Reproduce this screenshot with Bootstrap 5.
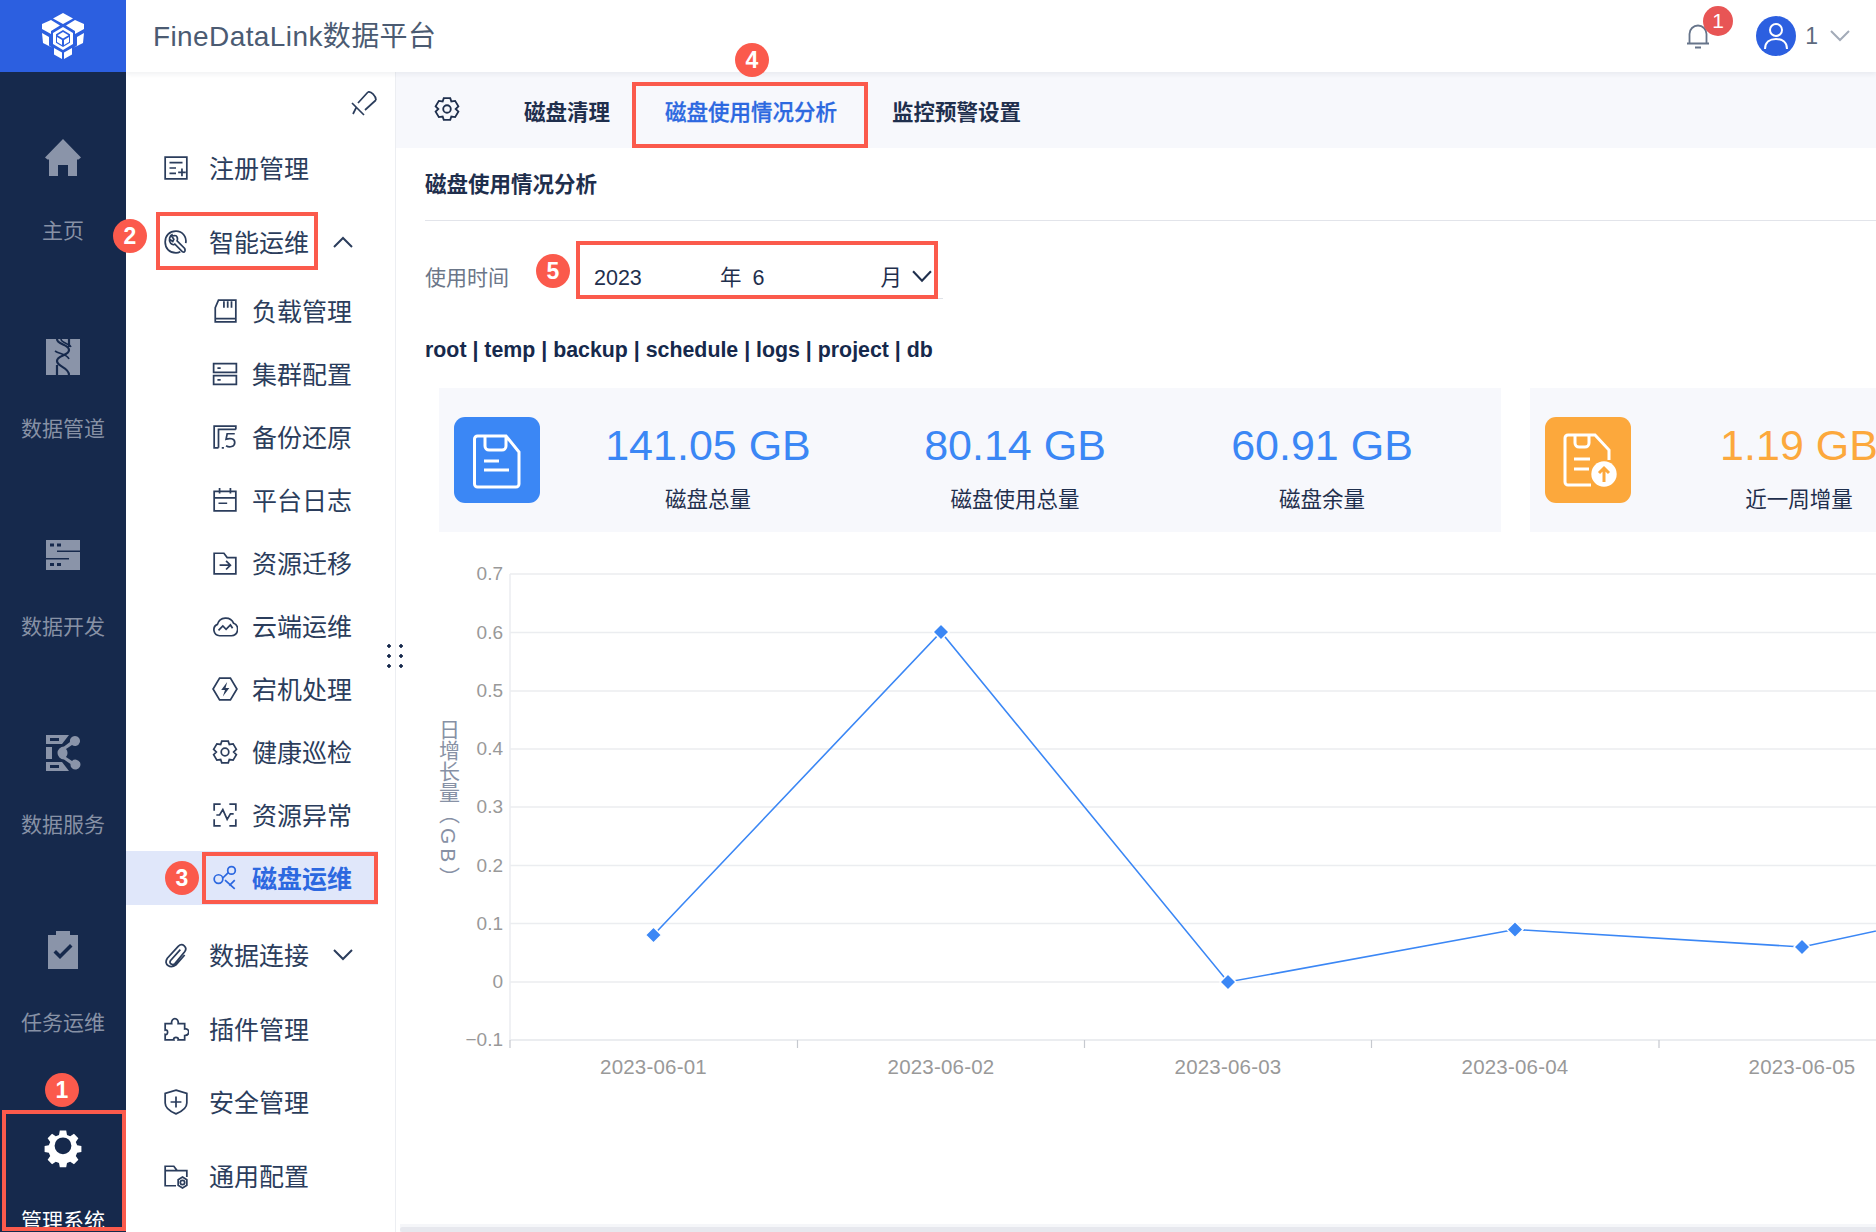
<!DOCTYPE html>
<html lang="zh">

<head>
	<meta charset="UTF-8" />
	<meta name="viewport" content="width=device-width, initial-scale=1" />
	<title>FineDataLink数据平台</title>
	<link href="https://cdn.jsdelivr.net/npm/bootstrap@5.3.0/dist/css/bootstrap.min.css" rel="stylesheet" />
	<style>
		:root {
		  --rail: #16294c;
		  --rail-text: #8791a5;
		  --ink: #2b3d5c;
		  --blue: #2c68e0;
		  --mark: #fb5a4c;
		  --soft: #f7f8fc;
		}

		html, body { height: 100%; }

		body {
		  font-family: "Liberation Sans", "Noto Sans CJK SC", sans-serif;
		  color: var(--ink);
		  background: #fff;
		  overflow: hidden;
		}

		.app { height: 1232px; }

		/* left rail */
		.rail { width: 126px; background: var(--rail); overflow: hidden; }
		.rail-logo { height: 72px; background: #2c5fe0; }
		.rail-item { height: 198px; padding-top: 63px; color: var(--rail-text); font-size: 21px; line-height: 28px; }
		.rail-item svg { width: 48px; height: 48px; fill: #8a94a9; margin-bottom: 34px; }
		.rail-item.on { color: #fff; }
		.rail-item.on svg { fill: #fff; }

		/* header */
		.topbar { height: 72px; padding: 0 26px 0 27px; box-shadow: 0 2px 5px rgba(30, 40, 70, .07); z-index: 2; }
		.brand { font-size: 28px; letter-spacing: .4px; color: #4b5b72; padding-top: 2px; }
		.bell-wrap { width: 34px; height: 34px; }
		.bell-count { width: 30px; height: 30px; left: 22px; top: -13px; background: #e85555; color: #fff; font-size: 21px; line-height: 30px; }
		.avatar { width: 40px; height: 40px; background: #2c5fe0; margin-left: 41px; }
		.user-name { font-size: 23px; color: #5d6a7e; margin: 0 12px 0 9px; }

		/* menu */
		.side { width: 270px; border-right: 1px solid #eceef2; flex-shrink: 0; }
		.pin-row { height: 65px; padding: 19px 18px 0 0; }
		.menu-top, .menu-sub { font-size: 25px; line-height: 1; color: var(--ink); }
		.menu-top { height: 62px; margin-bottom: 11.5px; padding: 0 42px 0 37px; gap: 20px; }
		.menu-top span { padding-top: 3px; }
		.menu-sub { height: 54px; margin-bottom: 9px; padding-left: 86px; gap: 14px; }
		.menu-sub span { padding-top: 2px; }
		.menu-gap { margin-top: 19px; }
		.menu-sub.on { background: #e0e7fa; color: var(--blue); width: 252px; font-weight: 700; }
		.menu-ico { width: 26px; height: 26px; fill: none; stroke: currentColor; stroke-width: 1.6; flex-shrink: 0; }
		.arrow { width: 20px; height: 12px; fill: none; stroke: currentColor; stroke-width: 2; }
		.grip { right: -12px; top: 569px; width: 24px; height: 30px; z-index: 3; background-image: radial-gradient(circle, #16294c 1.5px, transparent 2px); background-size: 12px 10px; }

		/* tabs */
		.tabbar { height: 76px; background: var(--soft); padding: 6px 0 0 38px; font-size: 21.5px; font-weight: 700; color: #1f2f4d; }
		.tabbar svg { width: 26px; height: 26px; fill: none; stroke: #1f2f4d; stroke-width: 1.7; margin-right: 64px; margin-top: -8px; }
		.tab-now { color: var(--blue); margin: 0 55px; font-weight: 500; -webkit-text-stroke: .3px var(--blue); }

		/* page */
		.page-head { margin: 0 0 0 29px; height: 73px; border-bottom: 1px solid #e2e4ea; font-size: 21.5px; font-weight: 700; color: #1f2f4d; line-height: 74px; }
		.time-row { margin-left: 29px; height: 114px; }
		.time-label { font-size: 21px; color: #6b7688; width: 151px; }
		.time-field { width: 367px; height: 56px; padding: 15px 11px 0 18px; border-bottom: 1px solid #dfe2e8; font-size: 21.5px; color: #1f2f4d; margin-bottom: 14px; }
		.time-field svg { width: 20px; height: 13px; margin-top: -4px; fill: none; stroke: #1f2f4d; stroke-width: 2; }
		.t-year { width: 126px; }
		.t-month { width: 128px; margin-left: 11px; }
		.path-row { margin-left: 29px; font-size: 21.35px; font-weight: 700; color: #16294c; line-height: 30px; height: 30px; }
		.stat-row { margin: 23px 0 0 43px; gap: 29px; }
		.stat-box { width: 1062px; height: 144px; background: var(--soft); padding-left: 15px; flex-shrink: 0; }
		.stat-ico { width: 86px; height: 86px; border-radius: 11px; margin-right: 14.5px; flex-shrink: 0; }
		.stat-ico svg { width: 62px; height: 62px; fill: none; stroke: #fff; stroke-width: 3; }
		.ico-blue { background: #3b87f5; }
		.ico-orange { background: #fca83c; }
		.stat-col { width: 307px; flex-shrink: 0; padding-top: 32px; align-self: flex-start; }
		.stat-num { font-size: 43px; line-height: 50px; color: #3b87f5; }
		.stat-num.warm { color: #fca83c; }
		.stat-name { font-size: 21.5px; line-height: 28px; color: #1f2f4d; margin-top: 16px; }
		.chart { width: 1480px; height: 560px; margin-top: 8px; }
		.chart text { font-family: "Liberation Sans", "Noto Sans CJK SC", sans-serif; fill: #999; font-size: 19px; }
		.chart .date-tick { font-size: 20.5px; letter-spacing: .2px; }
		.chart .axis-name { writing-mode: vertical-rl; font-size: 21px; fill: #8791a5; }
		.axis-unit { letter-spacing: 4px; }
		.hscroll { left: 4px; right: 0; bottom: 0; height: 8px; background: #f5f6f9; }
		.hscroll span { height: 5px; background: #e7e8ee; border-radius: 3px 0 0 3px; margin-top: 3px; }

		/* red call-outs drawn over the shot */
		.call-box { border: 4px solid var(--mark); z-index: 5; }
		.call-dot { width: 34px; height: 34px; border-radius: 50%; background: var(--mark); color: #fff; font-size: 23px; font-weight: 700; line-height: 34px; text-align: center; z-index: 6; }
		.b1 { left: 2px; top: 1110px; width: 124px; height: 121px; }
		.b2 { left: 156px; top: 212px; width: 162px; height: 58px; }
		.b3 { left: 202px; top: 852px; width: 176px; height: 52px; }
		.b4 { left: 632px; top: 82px; width: 236px; height: 66px; }
		.b5 { left: 576px; top: 241px; width: 362px; height: 58px; }
		.d1 { left: 45px; top: 1073px; }
		.d2 { left: 113px; top: 219px; }
		.d3 { left: 165px; top: 861px; }
		.d4 { left: 735px; top: 43px; }
		.d5 { left: 536px; top: 254px; }
	</style>
</head>

<body>
	<div class="app d-flex position-relative">
		<aside class="rail flex-shrink-0">
			<div class="rail-logo d-flex align-items-center justify-content-center">
				<svg width="46" height="48" viewBox="0 0 46 48" fill="#fff">
					<path d="M23 1l10 5.500-10 5.500-10-5.500zM11 8l9 5.500-9 5.500v3L2 17v-5zM35 8l9 4v5l-9 5v-3l-9-5.500zM2 21l7 4v8.500l3 2L3 31zM44 21l-1 10-9 4.500 3-2V25zM14 36l8 4.500V47l-8-4.500zM32 36v6.500L24 47v-6.500z" />
					<path d="M23 15l10 6v11l-10 6-10-6V21z" />
					<path d="M23 18l7 4.200v8.600L23 35l-7-4.200v-8.600z" fill="#2c5fe0" />
					<path d="M23 20l5.500 3.300L23 26.500l-5.500-3.200zM17 25l5 3v5l-5-3zM29 25v5l-5 3v-5z" />
				</svg>
			</div>
			<div class="rail-item text-center">
				<svg viewBox="0 0 48 48"><path d="M24 4L42 22.500l-2.500 2H38V41H29V30H19V41H10V24.500H8.500l-2.500-2z" /></svg>
				<div>主页</div>
			</div>
			<div class="rail-item text-center">
				<svg viewBox="0 0 48 48"><path d="M7 6h34v36H7z" /><path d="M18 6c0 6 12 5 12 11s-12 5-12 11 12 6 12 14M18 42V32M30 6v8" fill="none" stroke="#16294c" stroke-width="2.200" /><path d="M22 6c0 4 8 4 10 8M16 18c4 3 12 3 14 8" fill="none" stroke="#16294c" stroke-width="1.600" /></svg>
				<div>数据管道</div>
			</div>
			<div class="rail-item text-center">
				<svg viewBox="0 0 48 48"><path fill-rule="evenodd" d="M7 9h34v10.500H18V21h23v18H7V28.500h23V27H7zM11 12.500v3h4v-3zM18 12.500v3h4v-3zM11 32v3h4v-3zM18 32v3h4v-3z" /></svg>
				<div>数据开发</div>
			</div>
			<div class="rail-item text-center">
				<svg viewBox="0 0 48 48"><path fill-rule="evenodd" d="M7 6h23l-7 9H7zM11 9v3h9V9zM7 18h6v12H7zM7 33h16l7 9H7zM11 36v3h9v-3zM36 7a5 5 0 1 1-3 9l-6 4a6 6 0 0 1 0 8l6 4a5 5 0 1 1-1.500 3l-6.500-4.500a6.500 6.500 0 1 1 0-13L31 13a5 5 0 0 1 5-6z" /></svg>
				<div>数据服务</div>
			</div>
			<div class="rail-item text-center">
				<svg viewBox="0 0 48 48"><path fill-rule="evenodd" d="M9 8h8V4h14v4h8v34H9zM17 23l-2.500 2.500L21 32l12.500-12.500L31 17 21 27z" /></svg>
				<div>任务运维</div>
			</div>
			<div class="rail-item on text-center">
				<svg viewBox="-6 -2 60 60"><path fill-rule="evenodd" d="M20 5h8l1 5.500 4 1.700 4.700-3.200 5.500 5.500-3.200 4.700 1.700 4 5.300 1v7.600l-5.300 1-1.700 4 3.200 4.700-5.500 5.500-4.700-3.200-4 1.700-1 5.300h-8l-1-5.300-4-1.700-4.700 3.200-5.500-5.500 3.200-4.700-1.700-4-5.300-1v-7.600l5.300-1 1.700-4-3.200-4.700 5.500-5.500 4.700 3.200 4-1.700zM24 13.500a10.500 10.500 0 1 0 0 21 10.500 10.500 0 0 0 0-21z" /></svg>
				<div>管理系统</div>
			</div>
		</aside>

		<div class="flex-grow-1 d-flex flex-column overflow-hidden">
			<header class="topbar d-flex align-items-center bg-white position-relative">
				<div class="brand">FineDataLink数据平台</div>
				<div class="ms-auto d-flex align-items-center">
					<div class="bell-wrap position-relative d-flex align-items-center justify-content-center">
						<svg width="24" height="25" viewBox="0 0 24 25" fill="none" stroke="#66748a" stroke-width="1.800"><path d="M3.500 19V10a8.500 8.500 0 0 1 17 0v9M1 19.500h22M9 23.500h6" /></svg>
						<span class="bell-count position-absolute rounded-circle text-center">1</span>
					</div>
					<div class="avatar rounded-circle d-flex align-items-center justify-content-center">
						<svg width="28" height="30" viewBox="0 0 28 30" fill="none" stroke="#fff" stroke-width="2"><circle cx="14" cy="9" r="6" /><path d="M3 28c0-7 5-10 11-10s11 3 11 10" /></svg>
					</div>
					<span class="user-name">1</span>
					<svg width="20" height="12" viewBox="0 0 20 12" fill="none" stroke="#a3abb8" stroke-width="2"><path d="M1 1l9 9 9-9" /></svg>
				</div>
			</header>

			<div class="d-flex flex-grow-1 overflow-hidden">
				<nav class="side position-relative">
					<div class="pin-row d-flex justify-content-end">
						<svg width="26" height="26" viewBox="0 0 26 26" fill="none" stroke="#2b3d5c" stroke-width="1.700"><path d="M1 12l12 12M7 12L17 1M14 19L25 9M17 1c3-1 8 4 8 8M5 17l-3 6" /></svg>
					</div>
					<div class="menu-top d-flex align-items-center">
						<svg class="menu-ico" viewBox="0 0 24 24"><path d="M2 2h20v20H2zM6 7h12M6 12h6M6 17h6M14 16h7M17.500 12.500v7" /></svg>
						<span>注册管理</span>
					</div>
					<div class="menu-top d-flex align-items-center">
						<svg class="menu-ico" viewBox="0 0 24 24"><path d="M21 13c1-6-3-11-9-11S2 6 2 12s4 10 10 10c2 0 3-.5 4-1M9 5c-3 1-4 5-2 8 1 1 3 2 4 1l7 7c2 1 3-1 2-3l-7-7c1-2 0-5-2-5l-3 .500 2 3-1 2-3-2" /></svg>
						<span>智能运维</span>
						<svg class="arrow ms-auto" viewBox="0 0 20 12"><path d="M1 11l9-9 9 9" /></svg>
					</div>
					<div class="menu-sub d-flex align-items-center">
						<svg class="menu-ico" viewBox="0 0 24 24"><path d="M6 2h16v20H3V9zM11 3v6M14.500 3v6M18 3v6M3 19h19" /></svg>
						<span>负载管理</span>
					</div>
					<div class="menu-sub d-flex align-items-center">
						<svg class="menu-ico" viewBox="0 0 24 24"><path d="M1.500 2.500h21v8h-21zM1.500 13.500h21v8h-21zM5 6.500h3M5 17.500h3" /></svg>
						<span>集群配置</span>
					</div>
					<div class="menu-sub d-flex align-items-center">
						<svg class="menu-ico" viewBox="0 0 24 24"><path d="M22 5V2H2v20h4M6 22V5h16M9 22h2M21 9h-7l-1 5c3-1 8-1 8 3s-5 5-8 3" /></svg>
						<span>备份还原</span>
					</div>
					<div class="menu-sub d-flex align-items-center">
						<svg class="menu-ico" viewBox="0 0 24 24"><path d="M2 4h20v18H2zM2 10h20M7 1v5M17 1v5M6 15h8" /></svg>
						<span>平台日志</span>
					</div>
					<div class="menu-sub d-flex align-items-center">
						<svg class="menu-ico" viewBox="0 0 24 24"><path d="M2 3h9l3 4h8v15H2zM7 14h10M13 10l4 4-4 4" /></svg>
						<span>资源迁移</span>
					</div>
					<div class="menu-sub d-flex align-items-center">
						<svg class="menu-ico" viewBox="0 0 24 24"><path d="M7 21a5.500 5.500 0 0 1-2-10.500 8 8 0 0 1 15-1A6 6 0 0 1 18 21zM6 16l4-4 3 3 4-4 2 3" /></svg>
						<span>云端运维</span>
					</div>
					<div class="menu-sub d-flex align-items-center">
						<svg class="menu-ico" viewBox="0 0 24 24"><path d="M7 2h10l6 10-6 10H7L1 12z" /><path d="M14 5.500L8.500 13H12l-2 6 6-8h-3.500z" fill="currentColor" stroke="none" /></svg>
						<span>宕机处理</span>
					</div>
					<div class="menu-sub d-flex align-items-center">
						<svg class="menu-ico" viewBox="0 0 24 24"><circle cx="12" cy="12" r="3.500" /><path d="M9 2h6l1 3 3.500-.500 3 5L20 12l2.500 2.500-3 5L16 19l-1 3H9l-1-3-3.500.500-3-5L4 12 1.500 9.500l3-5L8 5z" /></svg>
						<span>健康巡检</span>
					</div>
					<div class="menu-sub d-flex align-items-center">
						<svg class="menu-ico" viewBox="0 0 24 24"><path d="M8 2H2v6M16 2h6v6M8 22H2v-6M16 22h6v-6M4 12h3l3-5 4 9 3-5h3" /></svg>
						<span>资源异常</span>
					</div>
					<div class="menu-sub on d-flex align-items-center">
						<svg class="menu-ico" viewBox="0 0 24 24"><circle cx="6" cy="13" r="4" /><circle cx="18" cy="5" r="3.500" /><path d="M10 12l5-5M12 14l9 8M21 14l-5 5" /></svg>
						<span>磁盘运维</span>
					</div>
					<div class="menu-top menu-gap d-flex align-items-center">
						<svg class="menu-ico" viewBox="0 0 24 24"><path d="M16 7L7 17c-2 3 2 5 4 3L20 9c3-4-2-9-6-5L4 15c-4 6 3 10 8 6l8-9" /></svg>
						<span>数据连接</span>
						<svg class="arrow ms-auto" viewBox="0 0 20 12"><path d="M1 1l9 9 9-9" /></svg>
					</div>
					<div class="menu-top d-flex align-items-center">
						<svg class="menu-ico" viewBox="0 0 24 24"><path d="M2 7h6c-1-6 7-6 6 0h6v5c5-1 5 6 0 6v4h-6c1-3-5-3-4 0H2v-5c3 1 3-5 0-4z" /></svg>
						<span>插件管理</span>
					</div>
					<div class="menu-top d-flex align-items-center">
						<svg class="menu-ico" viewBox="0 0 24 24"><path d="M12 1l10 3v9c0 5-5 8-10 10C7 21 2 18 2 13V4zM12 7v10M7 12h10" /></svg>
						<span>安全管理</span>
					</div>
					<div class="menu-top d-flex align-items-center">
						<svg class="menu-ico" viewBox="0 0 24 24"><path d="M12 21H2V3h8l3 4h9v6M2 7h11" /><circle cx="18" cy="18" r="2" /><path d="M18 13l4 2.500v5L18 23l-4-2.500v-5z" /></svg>
						<span>通用配置</span>
					</div>
					<div class="grip position-absolute"></div>
				</nav>

				<main class="flex-grow-1 position-relative overflow-hidden">
					<div class="tabbar d-flex align-items-center">
						<svg viewBox="0 0 24 24"><circle cx="12" cy="12" r="3.500" /><path d="M9 2h6l1 3 3.500-.500 3 5L20 12l2.500 2.500-3 5L16 19l-1 3H9l-1-3-3.500.500-3-5L4 12 1.500 9.500l3-5L8 5z" /></svg>
						<span>磁盘清理</span>
						<span class="tab-now">磁盘使用情况分析</span>
						<span>监控预警设置</span>
					</div>
					<div class="page-head">磁盘使用情况分析</div>
					<div class="time-row d-flex align-items-center">
						<span class="time-label">使用时间</span>
						<div class="time-field d-flex align-items-center">
							<span class="t-year">2023</span>
							<span>年</span>
							<span class="t-month">6</span>
							<span>月</span>
							<svg class="ms-auto" viewBox="0 0 19 12"><path d="M1 1l8.500 9L18 1" /></svg>
						</div>
					</div>
					<div class="path-row">root | temp | backup | schedule | logs | project | db</div>
					<div class="stat-row d-flex">
						<div class="stat-box d-flex align-items-center">
							<div class="stat-ico ico-blue d-flex align-items-center justify-content-center">
								<svg viewBox="0 0 62 62"><path d="M11.500 7H40l13 16v32a3 3 0 0 1-3 3H11.500a3 3 0 0 1-3-3V10a3 3 0 0 1 3-3zM19 7v10a4 4 0 0 0 4 4h13a4 4 0 0 0 4-4V7M18 32h15M18 41h25" /></svg>
							</div>
							<div class="stat-col text-center"><div class="stat-num">141.05 GB</div><div class="stat-name">磁盘总量</div></div>
							<div class="stat-col text-center"><div class="stat-num">80.14 GB</div><div class="stat-name">磁盘使用总量</div></div>
							<div class="stat-col text-center"><div class="stat-num">60.91 GB</div><div class="stat-name">磁盘余量</div></div>
						</div>
						<div class="stat-box d-flex align-items-center">
							<div class="stat-ico ico-orange d-flex align-items-center justify-content-center">
								<svg viewBox="0 0 62 62"><path d="M34 56H11a3 3 0 0 1-3-3V9a3 3 0 0 1 3-3h27l14 15v10M18 6v8a4 4 0 0 0 4 4h6a4 4 0 0 0 4-4V6M17 30h16M17 40h15" /><circle cx="47" cy="45" r="12.700" fill="#fff" stroke="none" /><path d="M47 53V39M42 44l5-5 5 5" stroke="#fca83c" /></svg>
							</div>
							<div class="stat-col text-center"><div class="stat-num warm">1.19 GB</div><div class="stat-name">近一周增量</div></div>
						</div>
					</div>
					<svg class="chart d-block" viewBox="396 540 1480 560">
						<g stroke="#ebedf0" stroke-width="1.500">
							<path d="M510 574H1876M510 632.500H1876M510 691H1876M510 749H1876M510 807H1876M510 865.500H1876M510 923.500H1876M510 982H1876" fill="none" />
							<path d="M510 574V1040" />
							<path d="M510 1040H1876" stroke-width="2" />
						</g>
						<path d="M510 1040v8M797.500 1040v8M1084.500 1040v8M1371.500 1040v8M1659 1040v8" stroke="#c6c9cf" stroke-width="1.200" />
						<g text-anchor="end">
							<text x="503" y="580">0.7</text>
							<text x="503" y="638.500">0.6</text>
							<text x="503" y="697">0.5</text>
							<text x="503" y="755">0.4</text>
							<text x="503" y="813">0.3</text>
							<text x="503" y="871.500">0.2</text>
							<text x="503" y="929.500">0.1</text>
							<text x="503" y="988">0</text>
							<text x="503" y="1046">−0.1</text>
						</g>
						<text class="axis-name" x="448" y="719">日增长量<tspan class="axis-unit">（GB）</tspan></text>
						<g text-anchor="middle">
							<text class="date-tick" x="653.500" y="1074">2023-06-01</text>
							<text class="date-tick" x="941" y="1074">2023-06-02</text>
							<text class="date-tick" x="1228" y="1074">2023-06-03</text>
							<text class="date-tick" x="1515" y="1074">2023-06-04</text>
							<text class="date-tick" x="1802" y="1074">2023-06-05</text>
						</g>
						<polyline points="653.500,935 941,632 1228,982 1515,929.500 1802,947 2089,885" fill="none" stroke="#3b87f5" stroke-width="1.600" />
						<g fill="#3b87f5" stroke="#fff" stroke-width="1.500">
							<path d="M653.500 927l8 8-8 8-8-8z" />
							<path d="M941 624l8 8-8 8-8-8z" />
							<path d="M1228 974l8 8-8 8-8-8z" />
							<path d="M1515 921.500l8 8-8 8-8-8z" />
							<path d="M1802 939l8 8-8 8-8-8z" />
						</g>
					</svg>
					<div class="hscroll position-absolute"><span class="d-block"></span></div>
				</main>
			</div>
		</div>

		<div class="call-box b1 position-absolute"></div>
		<div class="call-box b2 position-absolute"></div>
		<div class="call-box b3 position-absolute"></div>
		<div class="call-box b4 position-absolute"></div>
		<div class="call-box b5 position-absolute"></div>
		<div class="call-dot d1 position-absolute">1</div>
		<div class="call-dot d2 position-absolute">2</div>
		<div class="call-dot d3 position-absolute">3</div>
		<div class="call-dot d4 position-absolute">4</div>
		<div class="call-dot d5 position-absolute">5</div>
	</div>
	<script src="https://cdn.jsdelivr.net/npm/bootstrap@5.3.0/dist/js/bootstrap.bundle.min.js"></script>
</body>

</html>
